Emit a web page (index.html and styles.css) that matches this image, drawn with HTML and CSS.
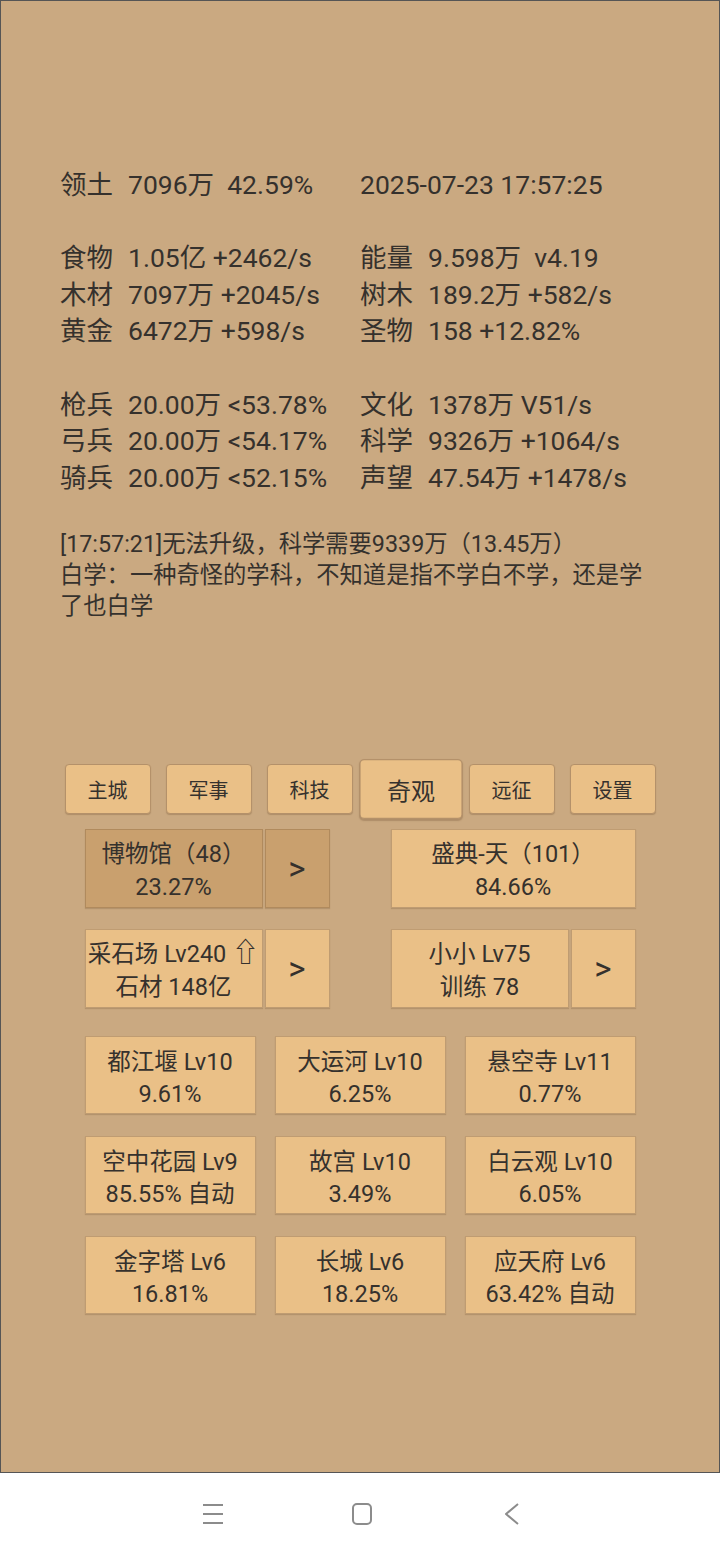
FILE: index.html
```html
<!DOCTYPE html>
<html lang="zh-CN">
<head>
<meta charset="utf-8">
<title>奇观</title>
<link rel="stylesheet" href="styles.css">
</head>
<body>
<div class="game">
  <div class="stats">
    <div class="cell"><span class="lab">领土</span><span class="val">7096万  42.59%</span></div>
    <div class="cell"><span class="val">2025-07-23 17:57:25</span></div>
    <div class="blank"></div>
    <div class="cell"><span class="lab">食物</span><span class="val">1.05亿 +2462/s</span></div>
    <div class="cell"><span class="lab">能量</span><span class="val">9.598万  v4.19</span></div>
    <div class="cell"><span class="lab">木材</span><span class="val">7097万 +2045/s</span></div>
    <div class="cell"><span class="lab">树木</span><span class="val">189.2万 +582/s</span></div>
    <div class="cell"><span class="lab">黄金</span><span class="val">6472万 +598/s</span></div>
    <div class="cell"><span class="lab">圣物</span><span class="val">158 +12.82%</span></div>
    <div class="blank"></div>
    <div class="cell"><span class="lab">枪兵</span><span class="val">20.00万 &lt;53.78%</span></div>
    <div class="cell"><span class="lab">文化</span><span class="val">1378万 V51/s</span></div>
    <div class="cell"><span class="lab">弓兵</span><span class="val">20.00万 &lt;54.17%</span></div>
    <div class="cell"><span class="lab">科学</span><span class="val">9326万 +1064/s</span></div>
    <div class="cell"><span class="lab">骑兵</span><span class="val">20.00万 &lt;52.15%</span></div>
    <div class="cell"><span class="lab">声望</span><span class="val">47.54万 +1478/s</span></div>
  </div>

  <div class="message">[17:57:21]无法升级，科学需要9339万（13.45万）<br>白学：一种奇怪的学科，不知道是指不学白不学，还是学了也白学</div>

  <div class="tabs">
    <div class="tab">主城</div>
    <div class="tab">军事</div>
    <div class="tab">科技</div>
    <div class="tab active">奇观</div>
    <div class="tab">远征</div>
    <div class="tab">设置</div>
  </div>

  <div class="pair-row">
    <div class="group">
      <div class="btn main dark"><span class="txt">博物馆（48）<br>23.27%</span></div>
      <div class="btn arrow dark"><span class="txt">&gt;</span></div>
    </div>
    <div class="group">
      <div class="btn wide"><span class="txt">盛典-天（101）<br>84.66%</span></div>
    </div>
  </div>

  <div class="pair-row">
    <div class="group">
      <div class="btn main"><span class="txt">采石场 Lv240 <span class="up">⇧</span><br>石材 148亿</span></div>
      <div class="btn arrow"><span class="txt">&gt;</span></div>
    </div>
    <div class="group">
      <div class="btn main"><span class="txt">小小 Lv75<br>训练 78</span></div>
      <div class="btn arrow"><span class="txt">&gt;</span></div>
    </div>
  </div>

  <div class="wonders">
    <div class="btn w"><span class="txt">都江堰 Lv10<br>9.61%</span></div>
    <div class="btn w"><span class="txt">大运河 Lv10<br>6.25%</span></div>
    <div class="btn w"><span class="txt">悬空寺 Lv11<br>0.77%</span></div>
    <div class="btn w"><span class="txt">空中花园 Lv9<br>85.55% 自动</span></div>
    <div class="btn w"><span class="txt">故宫 Lv10<br>3.49%</span></div>
    <div class="btn w"><span class="txt">白云观 Lv10<br>6.05%</span></div>
    <div class="btn w"><span class="txt">金字塔 Lv6<br>16.81%</span></div>
    <div class="btn w"><span class="txt">长城 Lv6<br>18.25%</span></div>
    <div class="btn w"><span class="txt">应天府 Lv6<br>63.42% 自动</span></div>
  </div>
</div>

<div class="navbar">
  <svg class="nav-icon" width="24" height="24" viewBox="0 0 24 24">
    <path d="M2 3h20M2 12h20M2 21h20" stroke="#8c8c8c" stroke-width="2" fill="none"/>
  </svg>
  <svg class="nav-icon" width="24" height="24" viewBox="0 0 24 24">
    <rect x="3" y="2" width="18" height="20" rx="4" ry="4" stroke="#8c8c8c" stroke-width="2" fill="none"/>
  </svg>
  <svg class="nav-icon" width="24" height="24" viewBox="0 0 24 24">
    <path d="M19 2L7 12l12 10" stroke="#8c8c8c" stroke-width="2" fill="none" stroke-linejoin="round"/>
  </svg>
</div>
</body>
</html>
```

FILE: styles.css
```css
html, body {
  margin: 0;
  padding: 0;
}

body {
  width: 720px;
  height: 1560px;
  overflow: hidden;
  background: #ffffff;
  font-family: Roboto, "Noto Sans CJK SC", sans-serif;
  color: #35312d;
}

.game {
  box-sizing: border-box;
  height: 1473px;
  border: 1px solid #555555;
  background: #caa981;
  padding-top: 166px;
}

.stats {
  display: grid;
  grid-template-columns: 300px 300px;
  padding-left: 59px;
  font-size: 26.5px;
  line-height: 36.6px;
}

.cell {
  display: flex;
  white-space: pre;
}

.lab {
  width: 68px;
  flex: none;
}

.blank {
  grid-column: 1 / 3;
  height: 36.6px;
}

.message {
  margin-top: 33px;
  padding-left: 59px;
  width: 590px;
  font-size: 23.3px;
  line-height: 31px;
}

.tabs {
  display: flex;
  justify-content: center;
  gap: 15px;
  margin-top: 142px;
}

.tab {
  box-sizing: border-box;
  width: 86px;
  height: 50px;
  display: flex;
  align-items: center;
  justify-content: center;
  background: #eac087;
  border: 1px solid #b4916a;
  border-radius: 4px;
  box-shadow: 0 1px 1px rgba(90, 60, 30, 0.25);
  font-size: 20px;
}

.tab.active {
  transform: scale(1.2);
}

.pair-row {
  display: flex;
  justify-content: center;
  gap: 61px;
  margin-top: 15px;
}

.pair-row + .pair-row {
  margin-top: 21px;
}

.group {
  display: flex;
  gap: 2px;
  width: 245px;
}

.btn {
  box-sizing: border-box;
  display: flex;
  align-items: center;
  justify-content: center;
  text-align: center;
  padding-top: 5px;
  background: #eac087;
  border: 1px solid #bf9c72;
  box-shadow: 0 1px 1px rgba(90, 60, 30, 0.2);
  font-size: 23.5px;
  line-height: 33px;
}

.txt {
  display: block;
  white-space: nowrap;
}

.btn.main {
  width: 178px;
  height: 79px;
}

.btn.arrow {
  width: 65px;
  height: 79px;
  padding-top: 0;
  font-size: 33px;
}

.btn.wide {
  width: 245px;
  height: 79px;
}

.btn.dark {
  background: #c9a06e;
  border-color: #b08a5d;
}

.up {
  font-family: "DejaVu Sans", sans-serif;
  font-size: 27px;
  font-weight: 300;
  line-height: 1;
}

.wonders {
  display: grid;
  grid-template-columns: repeat(3, 171px);
  grid-auto-rows: 78px;
  column-gap: 19px;
  row-gap: 22px;
  justify-content: center;
  margin-top: 28px;
}

.btn.w {
  line-height: 32px;
  padding-top: 6px;
}

.navbar {
  height: 87px;
  display: flex;
  align-items: center;
  justify-content: center;
  gap: 125px;
  padding-left: 4px;
  padding-bottom: 6px;
  box-sizing: border-box;
}

.nav-icon {
  display: block;
}
```
